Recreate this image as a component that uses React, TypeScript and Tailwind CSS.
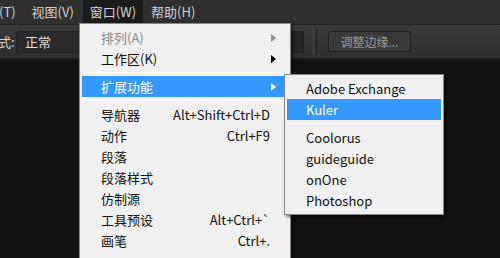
type Item = {
  label: string;
  shortcut?: string;
  sub?: boolean;
  disabled?: boolean;
  active?: boolean;
  sep?: boolean;
};

const mainItems: Item[] = [
  { label: "排列(A)", sub: true, disabled: true },
  { label: "工作区(K)", sub: true },
  { label: "", sep: true },
  { label: "扩展功能", sub: true, active: true },
  { label: "", sep: true },
  { label: "导航器", shortcut: "Alt+Shift+Ctrl+D" },
  { label: "动作", shortcut: "Ctrl+F9" },
  { label: "段落" },
  { label: "段落样式" },
  { label: "仿制源" },
  { label: "工具预设", shortcut: "Alt+Ctrl+`" },
  { label: "画笔", shortcut: "Ctrl+." },
];

const subItems: Item[] = [
  { label: "Adobe Exchange" },
  { label: "Kuler", active: true },
  { label: "", sep: true },
  { label: "Coolorus" },
  { label: "guideguide" },
  { label: "onOne" },
  { label: "Photoshop" },
];

function Arrow({ color }: { color: string }) {
  return (
    <svg width="5" height="8" viewBox="0 0 5 8" className="shrink-0">
      <path d="M0 0 L5 4 L0 8 Z" fill={color} />
    </svg>
  );
}

function MenuRow({ item }: { item: Item }) {
  if (item.sep) {
    return <div className="mx-[2px] my-[3px] h-px bg-[#a0a0a0] border-b border-white" />;
  }
  const text = item.active ? "text-white" : item.disabled ? "text-[#8a8a8a]" : "text-[#111]";
  return (
    <div
      className={`flex h-[21px] items-center mx-[2px] pl-[19px] pr-[12px] ${text} ${
        item.active ? "bg-[#3399ff]" : ""
      }`}
    >
      <span className="flex-1">{item.label}</span>
      {item.shortcut && <span className="pr-[6px]">{item.shortcut}</span>}
      {item.sub && (
        <Arrow color={item.active ? "#ffffff" : item.disabled ? "#8a8a8a" : "#000000"} />
      )}
    </div>
  );
}

export default function App() {
  return (
    <div
      className="relative w-[500px] h-[258px] overflow-hidden bg-[#111111] text-[13px]"
      style={{ fontFamily: '"Noto Sans CJK SC", "Open Sans", sans-serif' }}
    >
      {/* menubar */}
      <div className="flex h-[24px] items-center bg-[#2f2f2f] text-[#d2d2d2]">
        <span className="-ml-[1px]">(T)</span>
        <span className="ml-[16px]">视图(V)</span>
        <span className="ml-[9px] flex h-full items-center bg-[#1c1c1c] px-[7px]">窗口(W)</span>
        <span className="ml-[8px]">帮助(H)</span>
      </div>

      {/* option bar */}
      <div className="flex h-[36px] items-center border-t border-[#222] bg-gradient-to-b from-[#3a3a3a] to-[#2e2e2e] border-b-[2px] border-b-[#1a1a1a] text-[#d8d8d8]">
        <span className="-ml-[2px] w-[18px]">式:</span>
        <div className="flex h-[22px] w-[90px] items-center rounded-[2px] border border-[#222] bg-[#2a2a2a] pl-[8px] text-[#e0e0e0]">
          正常
        </div>
        <div className="ml-[182px] h-[22px] w-[16px] border border-[#222] bg-[#262626]" />
        <div className="ml-[9px] h-[26px] w-px bg-[#4a4a4a]" />
        <div className="ml-[2px] h-[26px] w-px bg-[#222]" />
        <div className="ml-[11px] flex h-[21px] w-[83px] items-center justify-center rounded-[3px] border border-[#1e1e1e] bg-[#393939] text-[12px] text-[#9a9a9a]">
          调整边缘...
        </div>
      </div>

      {/* main menu */}
      <div className="absolute left-[79px] top-[23px] w-[212px] h-[240px] border border-[#888] bg-[#f0f0f0] pt-[3px] shadow-[2px_2px_3px_rgba(0,0,0,0.5)]">
        {mainItems.map((it, i) => (
          <MenuRow key={i} item={it} />
        ))}
      </div>

      {/* submenu */}
      <div className="absolute left-[284px] top-[74px] w-[160px] border border-[#888] bg-[#f0f0f0] py-[3px] shadow-[2px_2px_3px_rgba(0,0,0,0.5)]">
        {subItems.map((it, i) => (
          <MenuRow key={i} item={it} />
        ))}
      </div>
    </div>
  );
}
